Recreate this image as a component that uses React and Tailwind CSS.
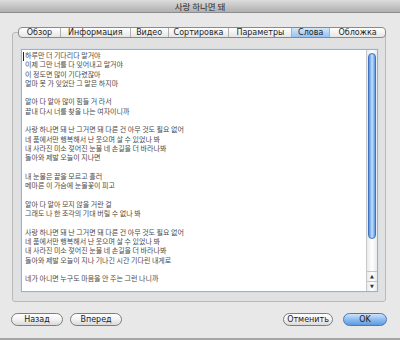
import React from "react";

const tabs = [
  { label: "Обзор", w: "w-[41px]" },
  { label: "Информация", w: "w-[70px]" },
  { label: "Видео", w: "w-[38px]" },
  { label: "Сортировка", w: "w-[61px]" },
  { label: "Параметры", w: "w-[63px]" },
  { label: "Слова", w: "w-[38px]", active: true },
  { label: "Обложка", w: "w-[56px]" },
];

const lyrics = `하루만 더 기다리다 말거야
이제 그만 너를 다 잊어내고 말거야
이 정도면 많이 기다렸잖아
얼마 못 가 잊었단 그 말은 하지마

알아 다 알아 많이 힘들 거 라서
끝내 다시 너를 찾을 나는 여자이니까

사랑 하나면 돼 난 그거면 돼 다른 건 아무 것도 필요 없어
네 품에서만 행복해서 난 웃으며 살 수 있었나 봐
내 사라진 미소 젖어진 눈물 네 손길을 더 바라나봐
돌아와 제발 오늘이 지나면

내 눈물은 끝을 모르고 흘러
메마른 이 가슴에 눈물꽃이 피고

알아 다 알아 모지 않을 거란 걸
그래도 나 한 조각의 기대 버릴 수 없나 봐

사랑 하나면 돼 난 그거면 돼 다른 건 아무 것도 필요 없어
네 품에서만 행복해서 난 웃으며 살 수 있었나 봐
내 사라진 미소 젖어진 눈물 네 손길을 더 바라나봐
돌아와 제발 오늘이 지나 기나긴 시간 기다린 내게로

네가 아니면 누구도 마음을 안 주는 그런 나니까`;

const PillButton = ({ children, className = "", blue = false }) => (
  <button
    className={
      "h-[13px] rounded-full text-[8px] leading-none flex items-center justify-center text-[#1a1a1a] " +
      (blue
        ? "border border-[#4a78b8] bg-gradient-to-b from-[#cfe3fa] via-[#8ebcf0] to-[#5f9ae0] "
        : "border border-[#7d7d7d] bg-gradient-to-b from-[#ffffff] via-[#f2f2f2] to-[#d9d9d9] ") +
      className
    }
  >
    {children}
  </button>
);

export default function App() {
  return (
    <div className="w-[400px] h-[340px] bg-[#e8e8e8] flex flex-col overflow-hidden font-['DejaVu_Sans',sans-serif] border-b-2 border-[#a5a5a5]">
      {/* title bar */}
      <div className="h-[13px] shrink-0 bg-gradient-to-b from-[#dcdcdc] to-[#b0b0b0] border-b border-[#8c8c8c] flex items-center justify-center text-[8.5px] leading-none text-[#2b2b2b] font-['Noto_Sans_CJK_KR',sans-serif]">
        사랑 하나면 돼
      </div>

      <div className="pl-[12px] pt-[14px]">
        <div className="w-[374px]">
          {/* tabs */}
          <div className="relative z-10 ml-[6px] flex h-[11px] w-[368px] rounded-[4px] border border-[#8a8a8a] overflow-hidden bg-gradient-to-b from-[#ffffff] to-[#e6e6e6]">
            {tabs.map((t, i) => (
              <div
                key={t.label}
                className={
                  t.w +
                  " flex items-center justify-center text-[8px] leading-none text-[#1e1e1e] " +
                  (i > 0 ? "border-l border-[#b0b0b0] " : "") +
                  (t.active ? "bg-gradient-to-b from-[#d4e6fb] to-[#94c2f2]" : "")
                }
              >
                {t.label}
              </div>
            ))}
          </div>

          {/* panel */}
          <div className="mt-[-6px] h-[270px] border border-[#b9b9b9] rounded-[3px] bg-[#e1e1e1] pt-[16px] pl-[8px]">
            <div className="w-[357px] h-[243px] border border-[#8eb3e0] bg-white flex shadow-[0_0_1px_#a8c8ef]">
              <div className="flex-1 pl-[3px] pt-[1px] relative font-['Noto_Sans_CJK_KR',sans-serif] text-[7px] leading-[9.3px] text-[#4a4a4a] whitespace-pre-line">
                <span className="absolute left-[1px] top-[2px] w-px h-[9px] bg-[#222]" />
                {lyrics}
              </div>
              {/* scrollbar */}
              <div className="w-[11px] h-full border-l border-[#c9c9c9] bg-gradient-to-r from-[#e9e9e9] via-[#ffffff] to-[#e9e9e9] flex flex-col">
                <div className="mt-[3px] mx-[1px] h-[186px] rounded-full border border-[#3f72bf] bg-gradient-to-r from-[#4f8fe0] via-[#c6e0fc] to-[#5a98e4]" />
                <div className="flex-1" />
                <div className="h-[10px] border-t border-[#c4c4c4] flex items-center justify-center text-[5px] leading-none text-[#333]">▲</div>
                <div className="h-[10px] border-t border-[#c4c4c4] flex items-center justify-center text-[5px] leading-none text-[#333]">▼</div>
              </div>
            </div>
          </div>
        </div>
      </div>

      {/* bottom buttons */}
      <div className="flex items-center pl-[11px] pr-[13px] mt-[11px]">
        <PillButton className="w-[52px]">Назад</PillButton>
        <PillButton className="w-[52px] ml-[7px]">Вперед</PillButton>
        <div className="flex-1" />
        <PillButton className="w-[50px]">Отменить</PillButton>
        <PillButton blue className="w-[44px] ml-[10px]">OK</PillButton>
      </div>
    </div>
  );
}
